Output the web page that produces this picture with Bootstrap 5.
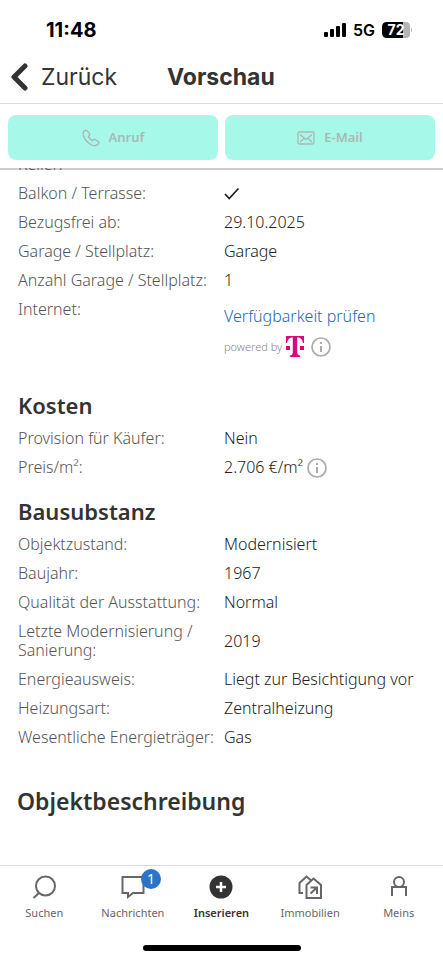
<!DOCTYPE html>
<html lang="de">
<head>
<meta charset="utf-8">
<meta name="viewport" content="width=device-width, initial-scale=1">
<title>Vorschau</title>
<link href="https://cdn.jsdelivr.net/npm/bootstrap@5.3.0/dist/css/bootstrap.min.css" rel="stylesheet">
<style>
  body { font-family: "Noto Sans", sans-serif; color: #333; background: #fff; }
  .ui-font { font-family: Inter, sans-serif; }
  .status { height: 60px; padding: 0 30px 0 46px; color: #000; }
  .clock { font-size: 20px; font-weight: 700; }
  .network { font-size: 16px; font-weight: 600; gap: 7px; }
  .titlebar { height: 44px; padding: 0 10px 9px; border-bottom: 1px solid #dcdcdc; font-size: 23px; line-height: 28px; gap: 50px; }
  .back-link { color: #333; gap: 13px; }
  .page-title { font-size: 23px; line-height: 28px; font-weight: 700; }
  .actions { padding: 11px 8px 8px; gap: 7px; border-bottom: 2px solid #cfcfcf; }
  .action-btn, .action-btn:disabled { height: 45px; border: 0; border-radius: 8px; background: #a6f9e9; color: #a9b8b5; opacity: 1; font-size: 13px; font-weight: 600; gap: 9px; }
  .content { margin-top: -2px; padding: 0 13px 0 18px; min-height: 0; }
  .scrolled { margin-top: -18px; }
  .fact { padding: 5px 0; font-size: 16px; line-height: 19px; font-weight: 300; }
  .fact dt { font-weight: 300; color: #555; white-space: nowrap; }
  .fact dd { color: #222; }
  .section-title { font-size: 22px; line-height: 30px; font-weight: 600; margin: 14px 0 4px; color: #333; }
  .check-link { color: #1f68b4; padding-top: 7px; }
  .powered { font-size: 11px; color: #888; padding-top: 10px; gap: 4px; }
  .info-btn { color: #aaa; line-height: 0; margin: -1px 0; }
  .powered .info-btn { margin-left: 3px; }
  .internet { padding-bottom: 19px; }
  .description { font-size: 23px; margin: 34px 0 0 -1px; }
  .tabs { border-top: 1px solid #dcdcdc; padding-top: 8px; height: 73px; }
  .tab-link { color: #666; font-size: 11px; line-height: 16px; gap: 5px; }
  .tab-link.current { color: #333; font-weight: 600; }
  .count { top: -5px; left: 21px; width: 20px; height: 20px; background: #2a75c8; color: #fff; font-size: 14px; line-height: 20px; }
  .home-area { height: 22px; padding-top: 7px; }
  .home-bar { width: 158px; height: 6px; background: #000; }
</style>
<script src="https://cdn.jsdelivr.net/npm/bootstrap@5.3.0/dist/js/bootstrap.bundle.min.js"></script>
</head>
<body>
<div class="d-flex flex-column vh-100 overflow-hidden">
  <header class="flex-shrink-0">
    <div class="status ui-font d-flex align-items-center justify-content-between">
      <span class="clock">11:48</span>
      <span class="d-flex align-items-center network">
        <svg width="22" height="14" viewBox="0 0 22 14" aria-hidden="true"><rect x="0" y="9" width="4" height="5" rx="1"/><rect x="6" y="6" width="4" height="8" rx="1"/><rect x="12" y="3" width="4" height="11" rx="1"/><rect x="18" y="0" width="4" height="14" rx="1"/></svg>
        <span>5G</span>
        <svg width="31" height="16" viewBox="0 0 31 16" role="img" aria-label="Akku 72"><path d="M21 0h3q4 0 4 4v8q0 4-4 4h-3z" fill="#b4b4b4"/><path d="M5 0h16v16H5q-5 0-5-5V5q0-5 5-5z"/><path d="M29 5.500q2 2.500 0 5z" fill="#b4b4b4"/><text x="14" y="13" text-anchor="middle" font-size="14" font-weight="700" fill="#fff">72</text></svg>
      </span>
    </div>
    <nav class="titlebar ui-font d-flex align-items-center">
      <a href="#" class="back-link d-flex align-items-center text-decoration-none">
        <svg width="18" height="28" viewBox="0 0 18 28" fill="none" stroke="currentColor" stroke-width="5" stroke-linecap="round" stroke-linejoin="round" aria-hidden="true"><path d="M15 3 4 14l11 11"/></svg>
        <span>Zurück</span>
      </a>
      <h1 class="page-title mb-0">Vorschau</h1>
    </nav>
    <div class="actions d-flex">
      <button class="btn action-btn flex-fill w-50 d-flex align-items-center justify-content-center" type="button" disabled>
        <svg width="18" height="18" viewBox="0 0 19 19" fill="none" stroke="currentColor" stroke-width="1.500" stroke-linejoin="round" aria-hidden="true"><path d="M2.500 2Q4 .5 5.500 2L8 5Q8.500 6 7.500 7L6.800 8Q8.500 11 11 12.300l1.200-1Q13.300 10.500 14.300 11.300L17.300 13.500Q18.300 14.500 17.200 15.800 14.500 18.700 10.500 17 3 13.500 1.200 6 .8 3.500 2.500 2Z"/></svg>
        Anruf
      </button>
      <button class="btn action-btn flex-fill w-50 d-flex align-items-center justify-content-center" type="button" disabled>
        <svg width="18" height="14" viewBox="0 0 18 14" fill="none" stroke="currentColor" stroke-width="1.300" stroke-linejoin="round" aria-hidden="true"><rect x="1" y="1" width="16" height="12" rx="1.500"/><path d="M3 3.500 9 8.500l6-5M3 11l4-3.500M15 11l-4-3.500"/></svg>
        E-Mail
      </button>
    </div>
  </header>

  <main class="content flex-grow-1 overflow-hidden position-relative">
    <dl class="scrolled mb-0">
      <div class="fact row g-0"><dt class="col-6">Keller:</dt><dd class="col-6 mb-0"></dd></div>
      <div class="fact row g-0"><dt class="col-6">Balkon / Terrasse:</dt><dd class="col-6 mb-0 d-flex align-items-center"><svg width="16" height="13" viewBox="0 0 16 13" fill="none" stroke="currentColor" stroke-width="1.800" role="img" aria-label="Ja"><path d="M1 7l4.200 4.500L14.500 1.500"/></svg></dd></div>
      <div class="fact row g-0"><dt class="col-6">Bezugsfrei ab:</dt><dd class="col-6 mb-0">29.10.2025</dd></div>
      <div class="fact row g-0"><dt class="col-6">Garage / Stellplatz:</dt><dd class="col-6 mb-0">Garage</dd></div>
      <div class="fact row g-0"><dt class="col-6">Anzahl Garage / Stellplatz:</dt><dd class="col-6 mb-0">1</dd></div>
      <div class="fact internet row g-0"><dt class="col-6">Internet:</dt>
        <dd class="col-6 mb-0">
          <a href="#" class="check-link d-block text-decoration-none">Verfügbarkeit prüfen</a>
          <div class="powered d-flex align-items-center">powered by
            <svg width="18" height="21" viewBox="0 0 18 21" fill="#d9087c" role="img" aria-label="Telekom"><path d="M0 0h18v7h-1Q16 1.500 11.200 1.300V16q0 3.300 3 3.500V21H3.800v-1.500q3-.2 3-3.500V1.300Q2 1.500 1 7H0zM0 10h4v4H0zM14 10h4v4h-4z"/></svg>
            <button type="button" class="btn info-btn border-0 p-0" aria-label="Info zur Verfügbarkeit"><svg width="20" height="20" viewBox="0 0 20 20" fill="none" stroke="currentColor" stroke-width="1.700" aria-hidden="true"><circle cx="10" cy="10" r="9"/><path d="M10 9v6M10 5v2" stroke-width="2"/></svg></button>
          </div>
        </dd>
      </div>
    </dl>

    <h2 class="section-title">Kosten</h2>
    <dl class="mb-0">
      <div class="fact row g-0"><dt class="col-6">Provision für Käufer:</dt><dd class="col-6 mb-0">Nein</dd></div>
      <div class="fact row g-0"><dt class="col-6">Preis/m²:</dt><dd class="col-6 mb-0 d-flex align-items-center gap-1">2.706 €/m²
        <button type="button" class="btn info-btn border-0 p-0" aria-label="Info zum Preis"><svg width="20" height="20" viewBox="0 0 20 20" fill="none" stroke="currentColor" stroke-width="1.700" aria-hidden="true"><circle cx="10" cy="10" r="9"/><path d="M10 9v6M10 5v2" stroke-width="2"/></svg></button></dd></div>
    </dl>

    <h2 class="section-title">Bausubstanz</h2>
    <dl class="mb-0">
      <div class="fact row g-0"><dt class="col-6">Objektzustand:</dt><dd class="col-6 mb-0">Modernisiert</dd></div>
      <div class="fact row g-0"><dt class="col-6">Baujahr:</dt><dd class="col-6 mb-0">1967</dd></div>
      <div class="fact row g-0"><dt class="col-6">Qualität der Ausstattung:</dt><dd class="col-6 mb-0">Normal</dd></div>
      <div class="fact row g-0 align-items-center"><dt class="col-6">Letzte Modernisierung /<br>Sanierung:</dt><dd class="col-6 mb-0">2019</dd></div>
      <div class="fact row g-0"><dt class="col-6">Energieausweis:</dt><dd class="col-6 mb-0">Liegt zur Besichtigung vor</dd></div>
      <div class="fact row g-0"><dt class="col-6">Heizungsart:</dt><dd class="col-6 mb-0">Zentralheizung</dd></div>
      <div class="fact row g-0"><dt class="col-6">Wesentliche Energieträger:</dt><dd class="col-6 mb-0">Gas</dd></div>
    </dl>

    <h2 class="section-title description">Objektbeschreibung</h2>
  </main>

  <footer class="flex-shrink-0">
    <nav class="tabs">
      <ul class="nav nav-fill row row-cols-5 g-0">
        <li class="col"><a href="#" class="tab-link d-flex flex-column align-items-center text-decoration-none">
          <svg width="26" height="26" viewBox="0 0 26 26" fill="none" stroke="currentColor" stroke-width="2" aria-hidden="true"><circle cx="14.500" cy="12" r="9.500"/><path d="M8 19l-5.500 5"/></svg>Suchen</a></li>
        <li class="col"><a href="#" class="tab-link d-flex flex-column align-items-center text-decoration-none">
          <span class="position-relative d-flex"><svg width="26" height="26" viewBox="0 0 26 26" fill="none" stroke="currentColor" stroke-width="2" aria-hidden="true"><path d="M2.500 3h21v16H13l-5 4v-4H2.500z"/></svg><span class="count position-absolute rounded-circle text-center">1</span></span>Nachrichten</a></li>
        <li class="col"><a href="#" class="tab-link current d-flex flex-column align-items-center text-decoration-none" aria-current="page">
          <svg width="26" height="26" viewBox="0 0 26 26" aria-hidden="true"><circle cx="13" cy="13" r="11.500" fill="currentColor"/><path d="M13 8v10M8 13h10" stroke="#fff" stroke-width="2.500"/></svg>Inserieren</a></li>
        <li class="col"><a href="#" class="tab-link d-flex flex-column align-items-center text-decoration-none">
          <svg width="26" height="26" viewBox="0 0 26 26" fill="none" stroke="currentColor" stroke-width="2" aria-hidden="true"><path d="M6 19H2.500V9l7-6.500 4 3.500M9.500 24V11L16.500 4.500 24 11v13zM13.500 19.500l6-5.500M13.500 13.500h6.500V20"/></svg>Immobilien</a></li>
        <li class="col"><a href="#" class="tab-link d-flex flex-column align-items-center text-decoration-none">
          <svg width="26" height="26" viewBox="0 0 26 26" fill="none" stroke="currentColor" stroke-width="2" aria-hidden="true"><circle cx="13" cy="8" r="5"/><path d="M6 22v-9h14v9"/></svg>Meins</a></li>
      </ul>
    </nav>
    <div class="home-area d-flex justify-content-center"><div class="home-bar rounded-pill"></div></div>
  </footer>
</div>
</body>
</html>
